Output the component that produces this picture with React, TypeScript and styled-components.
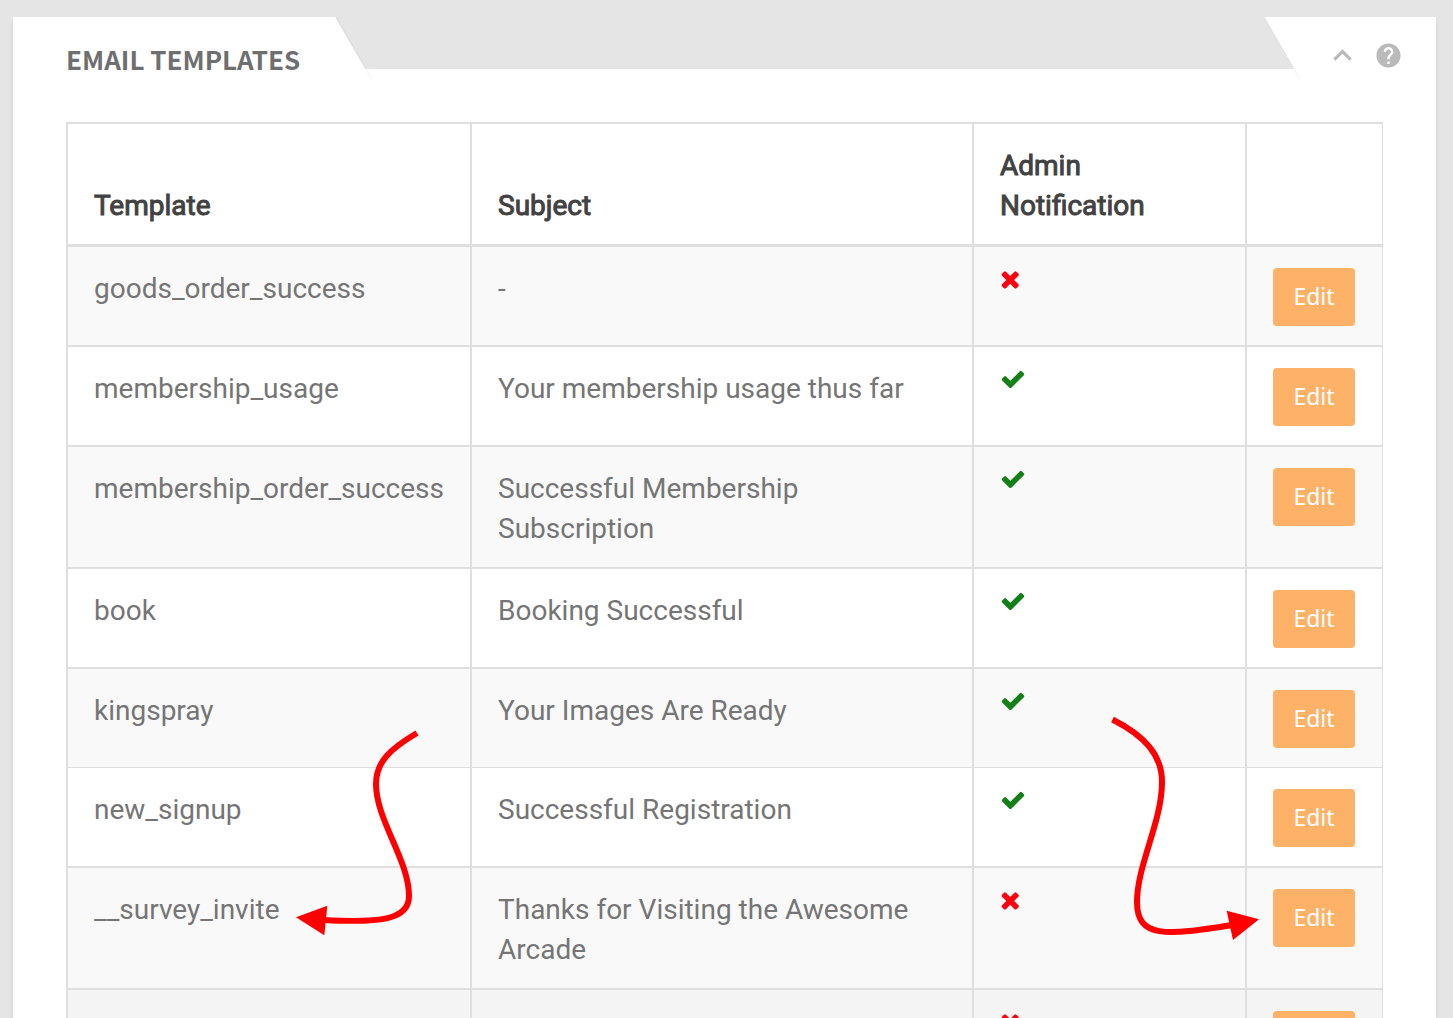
import React from "react";
import styled, { createGlobalStyle, css } from "styled-components";
import { MdExpandLess, MdHelp } from "react-icons/md";

const line = "#dfdfdf";

const GlobalStyle = createGlobalStyle`
  *, *::before, *::after { box-sizing: border-box; }
  body {
    margin: 0;
    background: #e5e5e5;
    font-family: Roboto, "Liberation Sans", sans-serif;
  }
`;

const Page = styled.main`
  height: 100vh;
  overflow: hidden;
  padding: 17px 17px 0 13px;
`;

const Panel = styled.section`
  position: relative;
  background: #fff;
  box-shadow: 0 4px 4px rgba(0, 0, 0, 0.1);
  padding-bottom: 40px;
`;

const PanelHeader = styled.header`
  display: flex;
  align-items: flex-start;
  height: 105px;
`;

const Title = styled.h2`
  flex: none;
  width: 323px;
  margin: 0;
  padding: 22px 0 0 53px;
  font-family: "Noto Sans CJK SC", "Open Sans", sans-serif;
  font-size: 26px;
  font-weight: 700;
  line-height: 40px;
  color: #6f6f6f;
  white-space: nowrap;
`;

const Notch = styled.div`
  flex: 1;
  display: flex;
  height: 52px;
`;

const NotchFill = styled.div`
  flex: 1;
  background: #e5e5e5;
`;

const Edge = styled.svg`
  flex: none;
  width: 30px;
  height: 52px;
  overflow: visible;
`;

const Actions = styled.div`
  flex: none;
  display: flex;
  align-items: center;
  justify-content: flex-end;
  gap: 13px;
  width: 142px;
  height: 76px;
  padding-right: 33px;
`;

const IconButton = styled.button`
  display: flex;
  padding: 0;
  border: 0;
  background: none;
  color: #bababa;
  cursor: pointer;
`;

const TableArea = styled.div`
  padding: 0 53px;
`;

const Table = styled.table`
  width: 100%;
  table-layout: fixed;
  border-collapse: separate;
  border-spacing: 0;
  border-top: 2px solid ${line};
  border-left: 2px solid ${line};
  font-size: 28px;
  line-height: 40px;
  color: #757575;
`;

const Col = styled.col<{ $width?: number }>`
  ${(p) => p.$width && css`width: ${p.$width}px;`}
`;

const cell = css`
  padding: 22px 26px 18px;
  text-align: left;
  border-right: 2px solid ${line};
  &:last-child { border-right-width: 1px; }
`;

const HeadCell = styled.th`
  ${cell}
  vertical-align: bottom;
  border-bottom: 3px solid ${line};
  font-weight: 400;
  -webkit-text-stroke: 1px #424242;
  color: #424242;
`;

const Row = styled.tr<{ $active?: boolean; $thin?: boolean }>`
  background: #fff;
  &:nth-child(odd) { background: #f9f9f9; }
  ${(p) => p.$active && css`background: #f4f4f4;`}
  > td { border-bottom: ${(p) => (p.$thin ? 1 : 2)}px solid ${line}; }
`;

const Cell = styled.td`
  ${cell}
  vertical-align: top;
`;

const StatusCell = styled(Cell)`
  padding-top: 19px;
`;

const ActionCell = styled(Cell)`
  padding-top: 21px;
  padding-bottom: 19px;
`;

const StatusIcon = styled.svg`
  display: block;
  height: 26px;
`;

const EditButton = styled.button`
  display: block;
  width: 82px;
  height: 58px;
  padding: 0 0 2px;
  border: 0;
  border-radius: 4px;
  background: #fdb267;
  color: #fff;
  font-family: "Noto Sans", "Open Sans", sans-serif;
  font-size: 23px;
  line-height: 34px;
  cursor: pointer;
`;

const Arrow = styled.svg<{ $side: "left" | "right" }>`
  position: absolute;
  top: 693px;
  width: 160px;
  height: 240px;
  pointer-events: none;
  ${(p) => (p.$side === "left" ? css`left: 277px;` : css`right: 166px;`)}
`;

const Check = () => (
  <StatusIcon viewBox="0 0 1792 1792" role="img" aria-label="Yes">
    <path
      fill="#128017"
      d="M1671 566q0 40-28 68l-724 724-136 136q-28 28-68 28t-68-28l-136-136-362-362q-28-28-28-68t28-68l136-136q28-28 68-28t68 28l294 295 656-657q28-28 68-28t68 28l136 136q28 28 28 68z"
    />
  </StatusIcon>
);

const Cross = () => (
  <StatusIcon viewBox="192 0 1408 1792" role="img" aria-label="No">
    <path
      fill="#ff0010"
      d="M1490 1322q0 40-28 68l-136 136q-28 28-68 28t-68-28l-294-294-294 294q-28 28-68 28t-68-28l-136-136q-28-28-28-68t28-68l294-294-294-294q-28-28-28-68t28-68l136-136q28-28 68-28t68 28l294 294 294-294q28-28 68-28t68 28l136 136q28 28 28 68t-28 68l-294 294 294 294q28 28 28 68z"
    />
  </StatusIcon>
);

type Template = { name: string; subject: string; notify: boolean; active?: boolean; thin?: boolean };

const templates: Template[] = [
  { name: "goods_order_success", subject: "-", notify: false },
  { name: "membership_usage", subject: "Your membership usage thus far", notify: true },
  { name: "membership_order_success", subject: "Successful Membership Subscription", notify: true },
  { name: "book", subject: "Booking Successful", notify: true },
  { name: "kingspray", subject: "Your Images Are Ready", notify: true, thin: true },
  { name: "new_signup", subject: "Successful Registration", notify: true },
  { name: "__survey_invite", subject: "Thanks for Visiting the Awesome Arcade", notify: false },
  { name: "", subject: "", notify: false, active: true },
];

export default function App() {
  return (
    <Page>
      <GlobalStyle />
      <Panel>
        <PanelHeader>
          <Title>EMAIL TEMPLATES</Title>
          <Notch>
            <Edge viewBox="0 0 30 52" aria-hidden="true">
              <path d="M0 0H30V52Z" fill="#e5e5e5" />
              <path d="M0 0L30 52" stroke="#dedede" strokeWidth="1.5" />
              <path d="M30 52L35 61" stroke="#f4f4f4" strokeWidth="1.5" />
            </Edge>
            <NotchFill />
            <Edge viewBox="0 0 30 52" aria-hidden="true">
              <path d="M0 0L30 52H0Z" fill="#e5e5e5" />
              <path d="M0 0L30 52" stroke="#e0e0e0" strokeWidth="1" />
              <path d="M30 52L35 61" stroke="#f4f4f4" strokeWidth="1.5" />
            </Edge>
          </Notch>
          <Actions>
            <IconButton type="button" aria-label="Collapse">
              <MdExpandLess size={37} />
            </IconButton>
            <IconButton type="button" aria-label="Help">
              <MdHelp size={29} />
            </IconButton>
          </Actions>
        </PanelHeader>
        <TableArea>
          <Table>
            <colgroup>
              <Col $width={404} />
              <Col />
              <Col $width={273} />
              <Col $width={136} />
            </colgroup>
            <thead>
              <tr>
                <HeadCell scope="col">Template</HeadCell>
                <HeadCell scope="col">Subject</HeadCell>
                <HeadCell scope="col">Admin Notification</HeadCell>
                <HeadCell scope="col" aria-label="Actions" />
              </tr>
            </thead>
            <tbody>
              {templates.map((t, i) => (
                <Row key={i} $active={t.active} $thin={t.thin}>
                  <Cell>{t.name}</Cell>
                  <Cell>{t.subject}</Cell>
                  <StatusCell>{t.notify ? <Check /> : <Cross />}</StatusCell>
                  <ActionCell>
                    <EditButton type="button">Edit</EditButton>
                  </ActionCell>
                </Row>
              ))}
            </tbody>
          </Table>
        </TableArea>
        <Arrow $side="left" viewBox="290 710 160 240" aria-hidden="true">
          <path
            d="M417 733C390 749 376 762 376 784C376 820 409 860 409 896C409 920 380 923 324 920"
            fill="none"
            stroke="#f00"
            strokeWidth="6"
          />
          <path d="M296 917.3L327.3 905.7L324.3 935.3Z" fill="#f00" />
        </Arrow>
        <Arrow $side="right" viewBox="1110 710 160 240" aria-hidden="true">
          <path
            d="M1112.5 719.5C1145 736 1162 755 1162 782C1162 822 1137 865 1137 902C1137 938 1165 936 1232 925"
            fill="none"
            stroke="#f00"
            strokeWidth="6"
          />
          <path d="M1259 919.3L1226.7 910.7L1233 940Z" fill="#f00" />
        </Arrow>
      </Panel>
    </Page>
  );
}
